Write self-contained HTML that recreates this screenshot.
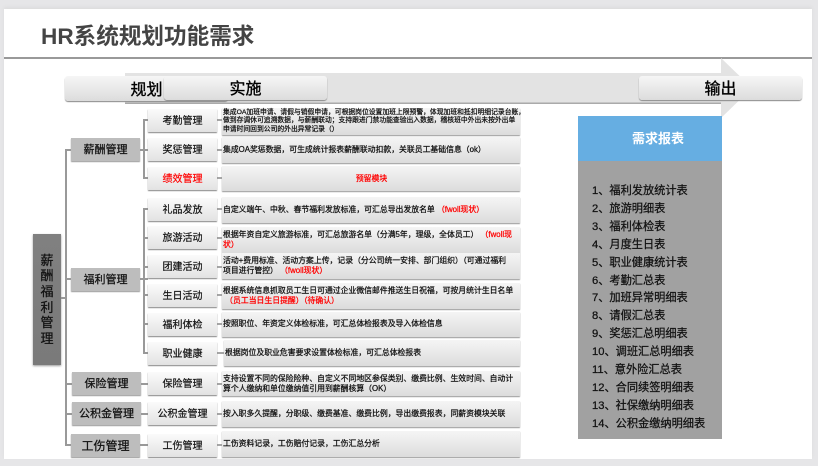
<!DOCTYPE html>
<html><head><meta charset="utf-8"><style>
html,body{margin:0;padding:0}
body{width:818px;height:466px;overflow:hidden;background:#e6e6e8;position:relative;font-family:"Liberation Sans","Noto Sans CJK SC",sans-serif;color:#111}
div{position:absolute;box-sizing:border-box}
#s{left:4px;top:9px;width:808px;height:450px;background:#fff;box-shadow:0 -2px 3px #ddd}
.c{display:flex;align-items:center;justify-content:center;text-align:center}
.b{height:25px;width:163px;top:76px;border-radius:3px;background:linear-gradient(#f6f6f6,#dcdcdc);box-shadow:0 1px 1px #888;font-size:16px;color:#000;-webkit-text-stroke:.35px #000;padding-bottom:2px}
.l1{width:69px;height:23px;background:#bdbdbd;box-shadow:0 1px 1px #999;font-size:11px;color:#111;-webkit-text-stroke:.25px #111;padding-bottom:1px}
.l2{left:148px;width:69px;height:23px;background:linear-gradient(#fbfbfb,#e2e2e2);box-shadow:0 1px 1px #888;font-size:10px;color:#111;-webkit-text-stroke:.2px #111;padding-bottom:2px}
.l3{left:222px;width:298px;background:linear-gradient(#f5f5f5,#dcdcdc);box-shadow:0 1px 1px #999;font-size:7.85px;line-height:9.6px;color:#111;display:flex;align-items:center;padding-left:1px;-webkit-text-stroke:.25px #111;white-space:nowrap}
.l3 span{display:block}
i{font-style:normal;color:#f00;-webkit-text-stroke:.25px #f00}
#r{left:592px;top:183px;font-size:11.2px;line-height:17.9px;color:#111;white-space:nowrap;-webkit-text-stroke:.25px #111}
</style></head><body>
<div id="s"></div>
<div style="left:41px;top:23px;font-size:22.6px;line-height:28px;font-weight:bold;color:#444;white-space:nowrap">HR系统规划功能需求</div>
<div style="left:4px;top:57px;width:808px;height:2px;background:#999"></div>

<svg style="position:absolute;left:0;top:0" width="818" height="466">
<polygon points="125,73 721,73 721,58 752,88 721,118 721,103 125,103" fill="#e3e3e3"/>
<rect x="125" y="102.5" width="596" height="1.5" fill="#aaa"/>
<g stroke="#999" stroke-width="2" fill="none">
<path d="M71 150H66V445H71M61 298H66M66 279H71M66 384H72M66 414H72"/>
<path d="M148 120H144V178H148M140 150H148M148 209H144V353H148M140 279H148M144 238H148M144 267H148M144 295H148M144 324H148M141 384H148M141 414H148M140 445H148"/>
</g>
<g stroke="#888" stroke-width="1.5" fill="none">
<path d="M217 120H222M217 150H222M217 178H222M217 209H222M217 238H222M217 267H222M217 295H222M217 324H222M217 353H224M217 384H222M217 414H222M217 445H222"/>
</g>
</svg>

<div class="b c" style="left:65px"><span>规划</span></div>
<div class="b c" style="left:164px;height:24px"><span>实施</span></div>
<div class="b c" style="left:639px;height:24px"><span>输出</span></div>

<div class="c" style="left:33px;top:234px;width:28px;height:131px;background:linear-gradient(#808080,#7a7a7a);box-shadow:0 1px 2px #999;font-size:13px;line-height:15.6px;color:#111;-webkit-text-stroke:.25px #111">薪<br>酬<br>福<br>利<br>管<br>理</div>

<div class="l1 c" style="left:71px;top:138px">薪酬管理</div>
<div class="l1 c" style="left:71px;top:268px">福利管理</div>
<div class="l1 c" style="left:72px;top:372px">保险管理</div>
<div class="l1 c" style="left:72px;top:402px">公积金管理</div>
<div class="l1 c" style="left:71px;top:434px;font-size:12px">工伤管理</div>

<div class="l2 c" style="top:109px">考勤管理</div>
<div class="l2 c" style="top:138px">奖惩管理</div>
<div class="l2 c" style="top:167px;color:#f00;-webkit-text-stroke-color:#f00">绩效管理</div>
<div class="l2 c" style="top:198px">礼品发放</div>
<div class="l2 c" style="top:226px">旅游活动</div>
<div class="l2 c" style="top:255px">团建活动</div>
<div class="l2 c" style="top:284px">生日活动</div>
<div class="l2 c" style="top:313px">福利体检</div>
<div class="l2 c" style="top:342px">职业健康</div>
<div class="l2 c" style="top:372px">保险管理</div>
<div class="l2 c" style="top:402px">公积金管理</div>
<div class="l2 c" style="top:434px">工伤管理</div>

<div class="l3" style="top:108px;height:27px;font-size:6.8px;line-height:8.2px"><span>集成OA加班申请、请假与销假申请，可根据岗位设置加班上限预警，体现加班和抵扣明细记录台账，<br>做到存调休可追溯数据，与薪酬联动；支持跟进门禁功能查验出入数据，稽核班中外出未按外出单<br>申请时间回到公司的外出异常记录（）</span></div>
<div class="l3" style="top:137px;height:26px"><span>集成OA奖惩数据，可生成统计报表薪酬联动扣款，关联员工基础信息（ok）</span></div>
<div class="l3 c" style="top:166px;height:25px;justify-content:center"><i>预留模块</i></div>
<div class="l3" style="top:197px;height:26px;padding-bottom:1px"><span>自定义端午、中秋、春节福利发放标准，可汇总导出发放名单 <i>（fwoll现状）</i></span></div>
<div class="l3" style="top:227px;height:26px"><span>根据年资自定义旅游标准，可汇总旅游名单（分满5年，理级，全体员工） <i>（fwoll现<br>状）</i></span></div>
<div class="l3" style="top:253px;height:26px"><span>活动+费用标准、活动方案上传，记录（分公司统一安排、部门组织）（可通过福利<br>项目进行管控） <i>（fwoll现状）</i></span></div>
<div class="l3" style="top:283px;height:26px;padding-bottom:1px"><span>根据系统信息抓取员工生日可通过企业微信邮件推送生日祝福，可按月统计生日名单<br><i>&nbsp;（员工当日生日提醒）（待确认）</i></span></div>
<div class="l3" style="top:312px;height:25px;padding-bottom:2px"><span>按照职位、年资定义体检标准，可汇总体检报表及导入体检信息</span></div>
<div class="l3" style="top:340px;height:26px;left:224px;width:296px"><span>根据岗位及职业危害要求设置体检标准，可汇总体检报表</span></div>
<div class="l3" style="top:371px;height:25px"><span>支持设置不同的保险险种、自定义不同地区参保类别、缴费比例、生效时间、自动计<br>算个人缴纳和单位缴纳值引用到薪酬核算（OK）</span></div>
<div class="l3" style="top:401px;height:26px"><span>按入职多久提醒，分职级、缴费基准、缴费比例，导出缴费报表，同薪资模块关联</span></div>
<div class="l3" style="top:431px;height:26px"><span>工伤资料记录，工伤赔付记录，工伤汇总分析</span></div>

<div style="left:578px;top:116px;width:144px;height:45px;background:#66aee2"></div>
<div style="left:632px;top:131px;font-size:13px;line-height:16px;color:#fff;font-weight:bold;white-space:nowrap">需求报表</div>
<div style="left:578px;top:161px;width:144px;height:278px;background:#a1a1a1"></div>
<div id="r">1、福利发放统计表<br>2、旅游明细表<br>3、福利体检表<br>4、月度生日表<br>5、职业健康统计表<br>6、考勤汇总表<br>7、加班异常明细表<br>8、请假汇总表<br>9、奖惩汇总明细表<br>10、调班汇总明细表<br>11、意外险汇总表<br>12、合同续签明细表<br>13、社保缴纳明细表<br>14、公积金缴纳明细表</div>
</body></html>
